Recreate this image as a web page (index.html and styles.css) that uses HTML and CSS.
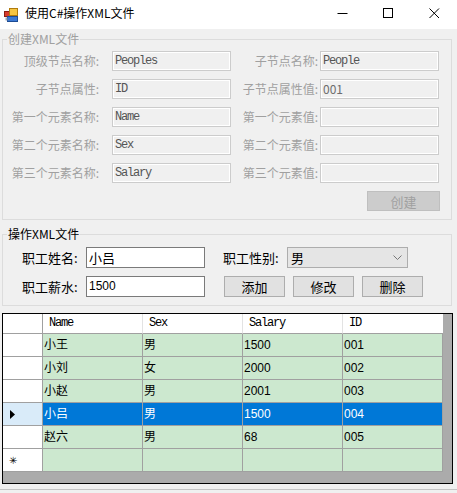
FILE: index.html
```html
<!DOCTYPE html>
<html lang="zh-CN">
<head>
<meta charset="utf-8">
<title>使用C#操作XML文件</title>
<link rel="stylesheet" href="styles.css">
</head>
<body>
<div class="window">
  <div class="titlebar">
    <svg class="app-icon" width="14" height="14" viewBox="0 0 14 14">
      <rect x="0.5" y="3.5" width="5" height="5" fill="#d83b2b" stroke="#8a1d12"/>
      <rect x="5.5" y="0.5" width="8" height="7" fill="#f5c542" stroke="#b07b0c"/>
      <rect x="3.5" y="8.5" width="10" height="5" fill="#3a78d4" stroke="#1c4b93"/>
      <rect x="1.5" y="9.5" width="2" height="3" fill="#9aa3b5"/>
    </svg>
    <span class="title">使用C#操作XML文件</span>
    <div class="controls">
      <span class="ctl"><svg width="11" height="11" viewBox="0 0 11 11"><path d="M0.5 5.5H10.5" stroke="#000" stroke-width="1"/></svg></span>
      <span class="ctl"><svg width="11" height="11" viewBox="0 0 11 11"><rect x="0.5" y="0.5" width="9" height="9" fill="none" stroke="#000"/></svg></span>
      <span class="ctl"><svg width="11" height="11" viewBox="0 0 11 11"><path d="M0.5 0.5L10 10M10 0.5L0.5 10" stroke="#000" stroke-width="1"/></svg></span>
    </div>
  </div>

  <div class="client">
    <fieldset class="group g1">
      <legend class="disabled">创建XML文件</legend>
      <div class="form-grid">
        <label class="lbl l1">顶级节点名称:</label>
        <div class="tb dis mono">Peoples</div>
        <label class="lbl l2">子节点名称:</label>
        <div class="tb dis mono">People</div>

        <label class="lbl l1">子节点属性:</label>
        <div class="tb dis mono">ID</div>
        <label class="lbl l2">子节点属性值:</label>
        <div class="tb dis">001</div>

        <label class="lbl l1">第一个元素名称:</label>
        <div class="tb dis mono">Name</div>
        <label class="lbl l2">第一个元素值:</label>
        <div class="tb dis"></div>

        <label class="lbl l1">第二个元素名称:</label>
        <div class="tb dis mono">Sex</div>
        <label class="lbl l2">第二个元素值:</label>
        <div class="tb dis"></div>

        <label class="lbl l1">第三个元素名称:</label>
        <div class="tb dis mono">Salary</div>
        <label class="lbl l2">第三个元素值:</label>
        <div class="tb dis"></div>

        <div class="btn-row"><span class="btn btn-dis">创建</span></div>
      </div>
    </fieldset>

    <fieldset class="group g2">
      <legend>操作XML文件</legend>
      <div class="op-row">
        <label class="lbl2">职工姓名:</label>
        <div class="tb2">小吕</div>
        <label class="lbl2 sex-lbl">职工性别:</label>
        <div class="combo"><span>男</span>
          <svg width="9" height="6" viewBox="0 0 9 6"><path d="M0.5 0.5L4.5 4.5L8.5 0.5" fill="none" stroke="#777" stroke-width="1"/></svg>
        </div>
      </div>
      <div class="op-row">
        <label class="lbl2">职工薪水:</label>
        <div class="tb2 num">1500</div>
        <span class="btn first">添加</span>
        <span class="btn">修改</span>
        <span class="btn">删除</span>
      </div>
    </fieldset>

    <div class="datagrid">
      <div class="row hdr">
        <div class="rh"></div>
        <div class="ch">Name</div>
        <div class="ch">Sex</div>
        <div class="ch">Salary</div>
        <div class="ch">ID</div>
      </div>
      <div class="row"><div class="rh"></div><div class="c">小王</div><div class="c">男</div><div class="c">1500</div><div class="c">001</div></div>
      <div class="row"><div class="rh"></div><div class="c">小刘</div><div class="c">女</div><div class="c">2000</div><div class="c">002</div></div>
      <div class="row"><div class="rh"></div><div class="c">小赵</div><div class="c">男</div><div class="c">2001</div><div class="c">003</div></div>
      <div class="row sel"><div class="rh"><svg width="5" height="9" viewBox="0 0 5 9"><path d="M0 0L5 4.5L0 9Z" fill="#000"/></svg></div><div class="c">小吕</div><div class="c">男</div><div class="c">1500</div><div class="c">004</div></div>
      <div class="row"><div class="rh"></div><div class="c">赵六</div><div class="c">男</div><div class="c">68</div><div class="c">005</div></div>
      <div class="row"><div class="rh star">✳</div><div class="c"></div><div class="c"></div><div class="c"></div><div class="c"></div></div>
    </div>
    <div class="bottom-edge"></div>
  </div>
</div>
</body>
</html>
```

FILE: styles.css
```css
* { box-sizing: border-box; }
html, body { margin: 0; padding: 0; }
body {
  width: 457px;
  height: 493px;
  background: #f0f0f0;
  font-family: "Noto Sans CJK SC", "Liberation Sans", sans-serif;
  font-size: 12px;
  color: #000;
  overflow: hidden;
}
.window { width: 457px; }

.titlebar {
  height: 29px;
  background: #fff;
  display: flex;
  align-items: center;
}
.app-icon { margin-left: 4px; margin-top: 1px; }
.title {
  margin-left: 7px;
  font-size: 12px;
  line-height: 16px;
  margin-top: -3px;
}
.controls {
  margin-left: auto;
  display: flex;
  height: 29px;
  align-items: center;
  margin-top: -2px;
}
.ctl {
  width: 46px;
  height: 29px;
  display: flex;
  align-items: center;
  justify-content: center;
}

.client { padding: 3px 0 0 2px; }

.group {
  margin: 0;
  width: 450px;
  border: 1px solid #dcdcdc;
  padding: 0;
  min-width: 0;
}
.group legend {
  margin-left: 4px;
  padding: 0 1px;
  font-size: 12px;
  line-height: 14px;
  height: 14px;
}
.group legend.disabled { color: #a0a0a0; }

.form-grid {
  display: grid;
  grid-template-columns: 97px 131px 89px 121px;
  row-gap: 8px;
  padding: 5px 0 8px 0;
}
.lbl {
  color: #a0a0a0;
  font-size: 12px;
  line-height: 20px;
  height: 20px;
  text-align: right;
  white-space: nowrap;
}
.lbl.l1 { padding-right: 1px; }
.lbl.l2 { padding-right: 2px; }
.form-grid .tb:nth-child(4n+2) { margin-left: 12px; }

.tb {
  width: 119px;
  height: 20px;
  border: 1px solid #cccccc;
  box-shadow: inset 0 0 0 1px #ffffff;
  background: #f0f0f0;
  color: #6d6d6d;
  padding-left: 2px;
  line-height: 18px;
  font-size: 12px;
  white-space: nowrap;
  overflow: hidden;
}
.tb.mono {
  font-family: "Liberation Mono", "DejaVu Sans Mono", monospace;
  font-size: 12px;
  letter-spacing: -1.2px;
  color: #555;
}
.btn-row {
  grid-column: 1 / -1;
  display: flex;
  justify-content: flex-end;
  padding-right: 1px;
}
.btn {
  width: 61px;
  height: 21px;
  border: 1px solid #adadad;
  background: #e1e1e1;
  display: flex;
  align-items: center;
  justify-content: center;
  font-size: 13px;
  line-height: 19px;
}
.btn-dis {
  width: 73px;
  height: 20px;
  background: #cccccc;
  border-color: #bfbfbf;
  color: #a0a0a0;
}

.g2 { margin-top: 7px; }
.g2 legend { color: #000; }
.op-row {
  display: flex;
  align-items: center;
  padding-left: 19px;
  height: 21px;
}
.op-row:first-of-type { margin-top: 6px; }
.op-row + .op-row { margin-top: 8px; margin-bottom: 8px; }
.lbl2 {
  width: 64px;
  font-size: 13px;
  line-height: 21px;
  white-space: nowrap;
}
.sex-lbl { margin-left: 18px; }
.tb2 {
  width: 119px;
  height: 21px;
  border: 1px solid #7a7a7a;
  background: #fff;
  padding-left: 2px;
  font-size: 13px;
  line-height: 19px;
}
.tb2.num { font-family: "Liberation Sans", sans-serif; font-size: 12px; }
.combo {
  width: 121px;
  height: 21px;
  border: 1px solid #adadad;
  background: #e5e5e5;
  display: flex;
  align-items: center;
  justify-content: space-between;
  padding: 0 5px 0 3px;
  font-size: 13px;
}
.btn.first { margin-left: 19px; }
.op-row .btn + .btn { margin-left: 8px; }

.datagrid {
  margin-top: 7px;
  width: 451px;
  height: 171px;
  border: 1px solid #000;
  background: #ababab;
}
.row { display: flex; height: 23px; }
.row.hdr { height: 20px; }
.rh {
  width: 40px;
  background: #fff;
  border-right: 1px solid #a0a0a0;
  border-bottom: 1px solid #a0a0a0;
  display: flex;
  align-items: center;
  padding-left: 7px;
}
.ch {
  width: 100px;
  background: #fff;
  border-right: 1px solid #e3e3e3;
  border-bottom: 1px solid #a0a0a0;
  font-family: "Liberation Mono", "DejaVu Sans Mono", monospace;
  font-size: 12px;
  letter-spacing: -1.2px;
  padding-left: 6px;
  line-height: 19px;
}
.row.hdr .ch:last-child { border-right: none; }
.c {
  width: 100px;
  background: #cce8cf;
  border-right: 1px solid #a0a0a0;
  border-bottom: 1px solid #a0a0a0;
  padding-left: 1px;
  font-size: 12px;
  line-height: 22px;
  font-family: "Liberation Sans", "Noto Sans CJK SC", sans-serif;
  white-space: nowrap;
}
.row.sel .c { background: #0078d7; color: #fff; }
.row.sel .rh { background: #d9ebf9; }
.rh.star { font-size: 10px; padding-left: 6px; line-height: 22px; }
.bottom-edge {
  margin: 5px 0 0 -2px;
  height: 1px;
  width: 457px;
  background: #c4c4c4;
}
```
